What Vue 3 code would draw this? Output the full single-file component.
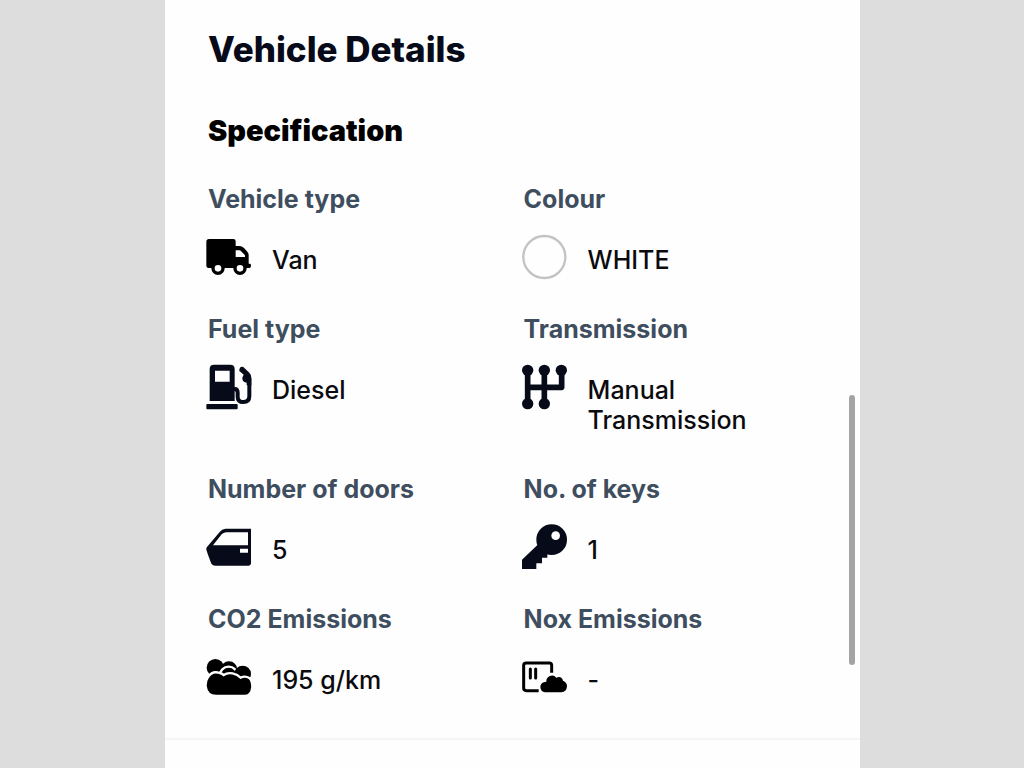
<script setup>
const specs = [
  { label: 'Vehicle type', value: 'Van', icon: 'van' },
  { label: 'Colour', value: 'WHITE', icon: 'colour' },
  { label: 'Fuel type', value: 'Diesel', icon: 'fuel' },
  { label: 'Transmission', value: 'Manual Transmission', icon: 'gears' },
  { label: 'Number of doors', value: '5', icon: 'door' },
  { label: 'No. of keys', value: '1', icon: 'key' },
  { label: 'CO2 Emissions', value: '195 g/km', icon: 'clouds' },
  { label: 'Nox Emissions', value: '-', icon: 'nox' },
]
</script>

<template>
  <div class="page">
    <main class="panel">
      <section class="details">
        <h1>Vehicle Details</h1>
        <h2>Specification</h2>
        <dl class="specs">
          <div v-for="s in specs" :key="s.label" class="spec">
            <dt>{{ s.label }}</dt>
            <dd>
              <svg class="icon" viewBox="27 21 144 144" aria-hidden="true">
                <g v-if="s.icon === 'van'">
                  <path fill="#000" fill-rule="evenodd" d="M39 39H112Q119 39 119 46V60H130Q138 60 144 66L154 77Q158 81 158 87V113H162Q165 113 165 119Q165 126 160 126H38Q31 126 31 118V47Q31 39 39 39ZM119 73V93H147V88L134 74Q133 73 130 73Z" />
                  <circle cx="66" cy="127" r="15" fill="#fff" stroke="#000" stroke-width="10" />
                  <circle cx="132" cy="127" r="15" fill="#fff" stroke="#000" stroke-width="10" />
                </g>
                <circle v-else-if="s.icon === 'colour'" cx="97" cy="93" r="63" fill="#fefefe" stroke="#c3c3c3" stroke-width="7" />
                <g v-else-if="s.icon === 'fuel'" fill="#070a18">
                  <path fill-rule="evenodd" d="M54 26H103Q116 26 116 39V135H41V39Q41 26 54 26ZM57 44V77H101V44Z" />
                  <rect x="31" y="144" width="94" height="16" rx="3" />
                  <path d="M112 99H116Q125 99 125 110V122Q125 138 142 138Q160 138 160 120V67" fill="none" stroke="#070a18" stroke-width="12" />
                  <path d="M130 41Q132 29 142 33L160 50Q166 56 166 65V88H152V80Q140 78 139 68Q139 62 143 56L131 46Q129 44 130 41Z" />
                </g>
                <g v-else-if="s.icon === 'gears'" fill="#070a18">
                  <path d="M47 43V143M97 43V143M47 94H149V43" fill="none" stroke="#070a18" stroke-width="17" stroke-linejoin="round" />
                  <circle cx="47" cy="43" r="17" />
                  <circle cx="97" cy="43" r="17" />
                  <circle cx="148" cy="43" r="17" />
                  <circle cx="47" cy="143" r="17" />
                  <circle cx="97" cy="143" r="17" />
                </g>
                <path v-else-if="s.icon === 'door'" fill="#070a18" fill-rule="evenodd" d="M88 38H165V142Q165 149 158 149H58Q50 149 46 143L36 116L31 101Q30 97 33 93L71 48Q78 39 88 38ZM90 49Q82 50 77 55L51 88H156V49ZM132 98V110H156V98Z" />
                <g v-else-if="s.icon === 'key'" fill="#070a18">
                  <path d="M77 86L30 131V159H73V142H90V125H106V113L119 100Z" />
                  <circle cx="119" cy="71" r="46" />
                  <circle cx="131" cy="59" r="13" fill="#fefefe" />
                </g>
                <g v-else-if="s.icon === 'clouds'" stroke="#fefefe" stroke-width="7">
                  <circle cx="99" cy="71" r="25" stroke="none" />
                  <circle cx="58" cy="65" r="26" stroke="none" />
                  <circle cx="98" cy="89" r="27" />
                  <circle cx="140" cy="84" r="25" stroke="none" />
                  <path d="M35 95Q48 73 71 81Q77 82 83 87Q94 79 110 82Q125 85 134 95Q148 88 161 97Q169 104 169 124Q166 150 145 150H60Q32 149 29 121Q28 104 35 95Z" />
                </g>
                <g v-else>
                  <path d="M80 134H43Q35 134 35 127V58Q35 51 43 51H112Q119 51 119 58V80" fill="none" stroke="#000" stroke-width="9" />
                  <path d="M55 69V96M71 69V96" stroke="#000" stroke-width="9" stroke-linecap="round" />
                  <path d="M103 107A17 17 0 0 1 133 95Q149 89 153 104Q165 109 165 121Q164 138 148 139H99Q86 137 85 123Q85 108 103 107Z" />
                </g>
              </svg>
              <span class="value">{{ s.value }}</span>
            </dd>
          </div>
        </dl>
      </section>
      <div class="scroll-thumb"></div>
    </main>
  </div>
</template>

<style>
body {
  margin: 0;
  background: #ddd;
}
</style>

<style scoped>
.page {
  min-height: 100vh;
  box-sizing: border-box;
  padding: 0 16% 0 165px;
  display: flex;
  background: #ddd;
  font-family: Inter, "Liberation Sans", sans-serif;
}
.panel {
  position: relative;
  flex: 1;
  background: #fefefe;
}
.details {
  padding: 25px 21px 37px 43px;
  border-bottom: 2px solid #f5f5f5;
}
h1 {
  margin: 0;
  font-size: 35px;
  line-height: 48px;
  font-weight: 800;
  color: #070a18;
}
h2 {
  margin: 38px 0 33px;
  font-size: 29px;
  line-height: 40px;
  font-weight: 900;
  color: #000;
}
.specs {
  margin: 0;
  display: grid;
  grid-template-columns: 1fr 1fr;
  row-gap: 33px;
}
dt {
  margin-bottom: 19px;
  font-size: 25px;
  line-height: 30px;
  font-weight: 700;
  color: #3e4e5f;
}
dd {
  margin: 0 0 0 -3px;
  display: flex;
  align-items: flex-start;
  gap: 19px;
}
.icon {
  flex: none;
  width: 48px;
  height: 48px;
}
.value {
  max-width: 200px;
  padding: 12px 0 6px;
  font-size: 25px;
  line-height: 30px;
  font-weight: 500;
  color: #0b0b0f;
}
.scroll-thumb {
  position: absolute;
  top: 395px;
  right: 5px;
  width: 6px;
  height: 270px;
  border-radius: 3px;
  background: #a4a4a4;
}
</style>
